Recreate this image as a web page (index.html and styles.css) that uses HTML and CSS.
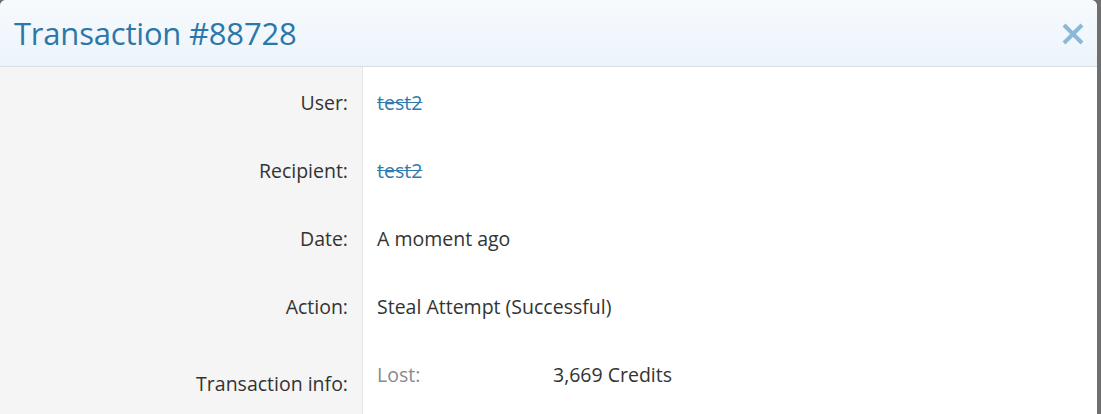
FILE: index.html
```html
<!DOCTYPE html>
<html>
<head>
<meta charset="utf-8">
<link rel="stylesheet" href="styles.css">
</head>
<body>
<div class="modal">
  <div class="modal-header">
    <h1 class="title">Transaction #88728</h1>
    <button class="close" aria-label="Close">
      <svg width="22" height="22" viewBox="0 0 22 22"><path d="M2 2L20 20M20 2L2 20" stroke="#8cb8d8" stroke-width="4" stroke-linecap="butt"/></svg>
    </button>
  </div>
  <div class="modal-body">
    <div class="row">
      <div class="label">User:</div>
      <div class="value"><a class="user-link">test2</a></div>
    </div>
    <div class="row">
      <div class="label">Recipient:</div>
      <div class="value"><a class="user-link">test2</a></div>
    </div>
    <div class="row">
      <div class="label">Date:</div>
      <div class="value">A moment ago</div>
    </div>
    <div class="row">
      <div class="label">Action:</div>
      <div class="value">Steal Attempt (Successful)</div>
    </div>
    <div class="row row-info">
      <div class="label">Transaction info:</div>
      <div class="value">
        <div class="info-line"><span class="info-key">Lost:</span><span class="info-val">3,669 Credits</span></div>
      </div>
    </div>
  </div>
</div>
</body>
</html>
```
FILE: styles.css
```css
html, body {
  margin: 0;
  padding: 0;
  height: 100%;
  overflow: hidden;
}
body {
  background: #6f6f6f;
  font-family: "Open Sans", "Noto Sans", sans-serif;
  color: #333;
}
.modal {
  width: 1097px;
  background: #fff;
  border-radius: 6px 6px 0 0;
  overflow: hidden;
  height: 414px;
}
.modal-header {
  height: 66px;
  border-bottom: 1px solid #d9dee3;
  background: linear-gradient(#f7fafd, #ecf4fb);
  display: flex;
  align-items: center;
  justify-content: space-between;
  padding: 0 13px 0 14px;
}
.title {
  margin: 0;
  font-weight: 400;
  font-size: 31px;
  color: #2c77a9;
  letter-spacing: -0.2px;
}
.close {
  border: 0;
  background: none;
  padding: 0;
  width: 22px;
  height: 22px;
  display: flex;
  margin-top: 2px;
}
.modal-body {
  display: flex;
  flex-direction: column;
  background: linear-gradient(to right, #f5f5f5 362px, #e6e6e6 362px, #e6e6e6 363px, #fff 363px);
}
.row {
  display: flex;
  font-size: 19.5px;
  line-height: 24px;
}
.label {
  width: 362px;
  box-sizing: border-box;
  text-align: right;
  padding: 24px 14px 20px 0;
}
.value {
  padding: 24px 0 20px 15px;
}
.row-info .label {
  padding-top: 33px;
}
.user-link {
  color: #2e7bb0;
  text-decoration: line-through;
}
.info-line {
  display: flex;
}
.info-key {
  width: 176px;
  color: #8a8a8a;
}
```
